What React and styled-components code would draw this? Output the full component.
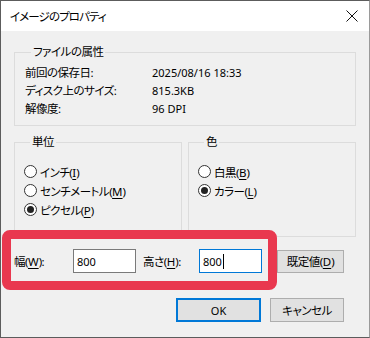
import React from "react";
import styled, { createGlobalStyle } from "styled-components";

const GlobalStyle = createGlobalStyle`
  * { box-sizing: border-box; }
  html, body {
    margin: 0;
    padding: 0;
    background: #f0f0f0;
    overflow: hidden;
  }
  body {
    font-family: "Noto Sans", "Noto Sans CJK JP", sans-serif;
    font-size: 11.5px;
    letter-spacing: -0.5px;
    color: #000;
    font-feature-settings: "palt";
  }
`;

const info = [
  ["前回の保存日:", "2025/08/16 18:33"],
  ["ディスク上のサイズ:", "815.3KB"],
  ["解像度:", "96 DPI"],
];

function Radio({ checked, label, accel }) {
  return (
    <RadioRow>
      <Circle $checked={checked} />
      <span>
        {label}(<U>{accel}</U>)
      </span>
    </RadioRow>
  );
}

export default function App() {
  return (
    <>
      <GlobalStyle />
      <Window>
        <TitleBar>
          <Title>イメージのプロパティ</Title>
          <CloseIcon width="12" height="12" viewBox="0 0 12 12">
            <path d="M0.5 0.5 L11.5 11.5 M11.5 0.5 L0.5 11.5" stroke="#111" strokeWidth="1" />
          </CloseIcon>
        </TitleBar>

        <Body>
          <Group>
            <Legend>ファイルの属性</Legend>
            <InfoGrid>
              {info.map(([k, v]) => (
                <React.Fragment key={k}>
                  <span>{k}</span>
                  <Latin>{v}</Latin>
                </React.Fragment>
              ))}
            </InfoGrid>
          </Group>

          <GroupRow>
            <Group $tall>
              <Legend>単位</Legend>
              <Radio label="インチ" accel="I" />
              <Radio label="センチメートル" accel="M" />
              <Radio label="ピクセル" accel="P" checked />
            </Group>
            <Group $tall>
              <Legend>色</Legend>
              <Radio label="白黒" accel="B" />
              <Radio label="カラー" accel="L" checked />
            </Group>
          </GroupRow>

          <SizeRow>
            <SizeFields>
              <FieldLabel $w={59}>
                幅(<U>W</U>):
              </FieldLabel>
              <TextBox>
                <Latin>800</Latin>
              </TextBox>
              <FieldLabel $w={56} $ml={7}>
                高さ(<U>H</U>):
              </FieldLabel>
              <TextBox $focused>
                <Latin>800</Latin>
                <Caret />
              </TextBox>
              <Highlight />
            </SizeFields>
            <Button $w={67} $h={23} $ml={15}>
              既定値(<U>D</U>)
            </Button>
          </SizeRow>

          <Footer>
            <Button $w={85} $default>
              <Latin>OK</Latin>
            </Button>
            <Button $w={74}>キャンセル</Button>
          </Footer>
        </Body>
      </Window>
    </>
  );
}

const Window = styled.div`
  width: 370px;
  height: 338px;
  display: flex;
  flex-direction: column;
  border: 1px solid #5c5c5c;
  border-right-color: #9a9a9a;
  background: #f0f0f0;
`;

const TitleBar = styled.div`
  height: 30px;
  flex-shrink: 0;
  background: #fff;
  display: flex;
  align-items: center;
  justify-content: space-between;
  padding: 0 11px 0 9px;
`;

const Title = styled.div`
  letter-spacing: -0.9px;
`;

const CloseIcon = styled.svg`
  display: block;
  margin-bottom: 1px;
`;

const Body = styled.div`
  flex: 1;
  display: flex;
  flex-direction: column;
  padding: 13px 13px 0 13px;
`;

const Group = styled.fieldset`
  margin: 0;
  min-width: 0;
  border: 1px solid #dcdcdc;
  padding: ${(p) => (p.$tall ? "12px 10px 17px 9px" : "3px 10px 8px 10px")};
`;

const Legend = styled.legend`
  margin-left: 6px;
  padding: 0 2px;
  line-height: 16px;
  height: 16px;
`;

const InfoGrid = styled.div`
  display: grid;
  grid-template-columns: 127px 1fr;
  grid-auto-rows: 18px;
  align-items: center;
`;

const Latin = styled.span`
  font-size: 11px;
  letter-spacing: 0;
`;

const GroupRow = styled.div`
  margin-top: 8px;
  display: grid;
  grid-template-columns: 168px 168px;
  column-gap: 6px;
`;

const RadioRow = styled.div`
  height: 19px;
  display: flex;
  align-items: center;
  gap: 3px;
`;

const Circle = styled.span`
  width: 13px;
  height: 13px;
  flex-shrink: 0;
  border: 1px solid #333;
  border-radius: 50%;
  background: #fff;
  display: flex;
  align-items: center;
  justify-content: center;

  &::after {
    content: "";
    width: 7px;
    height: 7px;
    border-radius: 50%;
    background: #222;
    display: ${(p) => (p.$checked ? "block" : "none")};
  }
`;

const U = styled.span`
  text-decoration: underline;
  text-underline-offset: 2px;
  letter-spacing: 0;
`;

const SizeRow = styled.div`
  margin-top: 12px;
  height: 24px;
  display: flex;
  align-items: center;
`;

const SizeFields = styled.div`
  position: relative;
  display: flex;
  align-items: center;
  height: 24px;
`;

const FieldLabel = styled.span`
  width: ${(p) => p.$w}px;
  margin-left: ${(p) => p.$ml || 0}px;
`;

const TextBox = styled.div`
  width: 63px;
  height: 24px;
  background: #fff;
  border: 1px solid ${(p) => (p.$focused ? "#0078d7" : "#7a7a7a")};
  padding-left: 3px;
  display: flex;
  align-items: center;
`;

const Caret = styled.span`
  width: 1px;
  height: 15px;
  background: #000;
  margin-left: 1px;
`;

const Highlight = styled.div`
  position: absolute;
  left: -12px;
  top: -19px;
  right: -15px;
  bottom: -17px;
  border: 9px solid #e9384f;
  border-radius: 8px;
  pointer-events: none;
`;

const Button = styled.div`
  width: ${(p) => p.$w}px;
  height: ${(p) => p.$h || 24}px;
  margin-left: ${(p) => p.$ml || 0}px;
  background: #e1e1e1;
  border: ${(p) => (p.$default ? "2px solid #0078d7" : "1px solid #adadad")};
  display: flex;
  align-items: center;
  justify-content: center;
`;

const Footer = styled.div`
  margin-top: 25px;
  display: flex;
  justify-content: flex-end;
  gap: 9px;
  padding-right: 12px;
`;
